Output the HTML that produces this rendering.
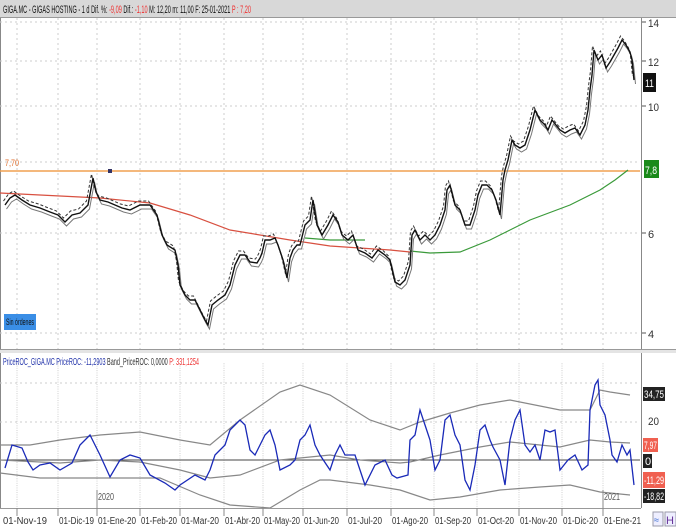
<!DOCTYPE html><html><head><meta charset="utf-8"><style>
body{margin:0;width:676px;height:527px;overflow:hidden;background:#fff;font-family:"Liberation Sans",sans-serif}
</style></head><body>
<svg width="676" height="527" xmlns="http://www.w3.org/2000/svg" font-family="Liberation Sans, sans-serif">
<defs>
<polyline id="pr" fill="none" points="5,205 10,198 15,195 22,200 30,205 40,208 50,212 58,215 65,222 72,215 80,213 88,205 93,178 96,192 100,200 108,202 115,205 122,208 130,210 140,205 150,205 157,215 162,235 167,245 175,250 178,265 180,285 185,295 190,300 195,300 200,310 205,320 208,325 212,305 218,300 225,295 230,285 235,265 240,255 245,255 250,262 257,263 260,258 262,253 265,240 270,240 275,238 278,245 283,260 287,278 290,258 293,250 297,245 300,245 305,225 310,220 313,200 317,225 322,235 328,225 333,215 338,222 342,235 348,240 353,235 358,250 365,253 372,258 378,250 385,255 390,260 395,282 400,285 405,280 410,265 412,235 415,230 420,240 425,235 430,240 435,235 440,225 445,210 447,190 450,185 455,205 460,210 465,225 470,225 475,210 478,195 482,185 487,185 492,190 496,200 500,215 503,180 505,170 508,160 510,150 512,140 515,145 520,148 525,145 530,130 535,110 540,120 545,125 548,130 552,120 556,125 560,130 565,133 570,130 575,128 580,135 585,125 588,110 590,90 592,75 594,50 598,60 602,55 606,68 610,62 614,55 618,48 622,40 626,45 630,52 632,60 634,80"/>
</defs>
<rect x="0" y="0" width="676" height="17" fill="#d8d8d8"/>
<line x1="0" y1="17.5" x2="676" y2="17.5" stroke="#999"/>
<text x="3" y="13" font-size="11" textLength="248" lengthAdjust="spacingAndGlyphs" fill="#111">GIGA.MC - GIGAS HOSTING - 1 d Dif. %: <tspan fill="#e33">-9,09</tspan> Dif.: <tspan fill="#e33">-1,10</tspan> M: 12,20 m: 11,00 F: 25-01-2021 <tspan fill="#e33">P : 7,20</tspan></text>
<line x1="0.5" y1="18" x2="0.5" y2="510" stroke="#888"/>
<line x1="641.5" y1="18" x2="641.5" y2="510" stroke="#888"/>
<g stroke="#ccc" stroke-dasharray="2,3">
<line x1="0" y1="22" x2="640" y2="22"/><line x1="0" y1="61" x2="640" y2="61"/><line x1="0" y1="106" x2="640" y2="106"/><line x1="0" y1="162" x2="640" y2="162"/><line x1="0" y1="233" x2="640" y2="233"/><line x1="0" y1="333" x2="640" y2="333"/>
<line x1="0" y1="383" x2="640" y2="383"/><line x1="0" y1="422" x2="640" y2="422"/>
<g id="vg"><line x1="17" y1="18" x2="17" y2="350"/><line x1="58" y1="18" x2="58" y2="350"/><line x1="97" y1="18" x2="97" y2="350"/><line x1="140" y1="18" x2="140" y2="350"/><line x1="180" y1="18" x2="180" y2="350"/><line x1="224" y1="18" x2="224" y2="350"/><line x1="263" y1="18" x2="263" y2="350"/><line x1="303" y1="18" x2="303" y2="350"/><line x1="347" y1="18" x2="347" y2="350"/><line x1="391" y1="18" x2="391" y2="350"/><line x1="434" y1="18" x2="434" y2="350"/><line x1="477" y1="18" x2="477" y2="350"/><line x1="519" y1="18" x2="519" y2="350"/><line x1="562" y1="18" x2="562" y2="350"/><line x1="603" y1="18" x2="603" y2="350"/></g>
<use href="#vg" transform="translate(0,355) scale(1,0.46)"/>
</g>
<line x1="0" y1="171" x2="640" y2="171" stroke="#f0a050" stroke-width="1.5"/>
<rect x="108" y="169" width="4" height="4" fill="#336"/>
<text x="5" y="166" font-size="9" fill="#e07030" textLength="14" lengthAdjust="spacingAndGlyphs">7,70</text>
<polyline fill="none" stroke="#d85040" stroke-width="1.2" points="0,193 40,195 100,198 150,203 190,215 230,230 290,240 330,246 390,250 410,252"/>
<polyline fill="none" stroke="#3a9a3a" stroke-width="1.2" points="305,238 330,240 365,240"/>
<polyline fill="none" stroke="#3a9a3a" stroke-width="1.2" points="410,251 430,253 460,252 490,240 530,220 570,205 600,190 615,180 628,170"/>
<use href="#pr" transform="translate(1.5,4)" stroke="#777" stroke-width="1"/>
<use href="#pr" transform="translate(-1.5,-4)" stroke="#333" stroke-width="1" stroke-dasharray="3,2"/>
<use href="#pr" stroke="#111" stroke-width="1.4"/>
<rect x="4" y="314" width="32" height="16" fill="#3a8ee6"/>
<text x="6" y="325" font-size="9" fill="#111" textLength="28" lengthAdjust="spacingAndGlyphs">Sin órdenes</text>
<g font-size="11" fill="#333"><text x="648" y="27" textLength="11" lengthAdjust="spacingAndGlyphs">14</text><text x="648" y="66" textLength="11" lengthAdjust="spacingAndGlyphs">12</text><text x="648" y="111" textLength="11" lengthAdjust="spacingAndGlyphs">10</text><text x="648" y="238">6</text><text x="648" y="338">4</text></g>
<g stroke="#555"><line x1="642" y1="22" x2="646" y2="22"/><line x1="642" y1="61" x2="646" y2="61"/><line x1="642" y1="106" x2="646" y2="106"/><line x1="642" y1="233" x2="646" y2="233"/><line x1="642" y1="333" x2="646" y2="333"/></g>
<rect x="643" y="73" width="13" height="19" fill="#111"/><text x="645" y="87" font-size="11" fill="#fff" textLength="9" lengthAdjust="spacingAndGlyphs">11</text>
<rect x="644" y="160" width="15" height="18" fill="#1a8a1a"/><text x="645" y="174" font-size="11" fill="#fff" textLength="12" lengthAdjust="spacingAndGlyphs">7,8</text>
<rect x="0" y="349" width="676" height="4" fill="#e4e4e4"/>
<line x1="0" y1="349.5" x2="676" y2="349.5" stroke="#999"/>
<text x="3" y="365" font-size="10" textLength="196" lengthAdjust="spacingAndGlyphs" fill="#2233aa">PriceROC_GIGA.MC PriceROC: -11,2903 <tspan fill="#333">Band_PriceROC: 0,0000</tspan> <tspan fill="#e33">P: 331,1254</tspan></text>
<line x1="0" y1="460" x2="640" y2="460" stroke="#444"/>
<g fill="none" stroke="#888" stroke-width="1.2">
<polyline points="0,445 30,445 60,440 100,435 140,432 180,440 210,445 240,420 280,392 300,385 330,395 370,420 400,430 420,422 450,413 480,405 510,400 560,410 590,410 600,390 610,392 630,395"/>
<polyline points="0,460 60,463 100,460 140,462 180,470 210,478 240,475 280,460 330,455 360,460 400,463 410,462 440,455 480,447 510,442 560,447 590,440 610,442 630,443"/>
<polyline points="0,473 40,478 100,478 160,478 200,495 230,505 270,508 300,490 320,480 330,480 370,485 400,490 430,500 460,497 500,490 540,487 570,485 600,492 630,495"/>
</g>
<polyline fill="none" stroke="#1a2ab8" stroke-width="1.3" points="5,468 12,445 22,448 28,462 33,470 40,465 50,463 60,470 72,463 80,445 90,435 95,445 100,455 110,477 120,460 130,455 140,458 150,475 165,483 175,490 180,485 195,475 205,480 210,470 215,455 220,450 225,445 230,430 235,425 240,420 245,425 250,450 255,455 260,445 265,435 270,430 275,445 280,470 290,465 295,460 300,440 305,435 310,425 315,445 320,455 330,470 335,455 340,445 345,455 355,455 360,470 365,485 375,465 385,460 392,475 397,478 408,475 410,440 415,435 420,410 425,425 430,440 435,470 440,460 445,420 450,415 455,435 460,445 465,480 470,490 475,465 480,430 485,425 490,440 493,447 500,460 505,485 510,440 515,420 520,410 525,445 530,452 535,445 540,460 545,430 550,432 555,430 560,470 568,460 575,455 582,470 588,465 590,410 595,385 598,380 600,405 605,415 610,440 612,455 617,462 622,445 627,455 630,450 634,485"/>
<text x="648" y="425" font-size="11" fill="#333" textLength="11" lengthAdjust="spacingAndGlyphs">20</text>
<g font-size="11" fill="#fff">
<rect x="643" y="387" width="22" height="14" fill="#222"/><text x="644" y="398" textLength="20" lengthAdjust="spacingAndGlyphs">34,75</text>
<rect x="643" y="438" width="15" height="14" fill="#f06050"/><text x="644" y="449" textLength="13" lengthAdjust="spacingAndGlyphs">7,97</text>
<rect x="643" y="454" width="9" height="14" fill="#222"/><text x="645" y="465">0</text>
<rect x="643" y="472" width="22" height="16" fill="#f06050"/><text x="644" y="484" textLength="20" lengthAdjust="spacingAndGlyphs">-11,29</text>
<rect x="643" y="489" width="22" height="14" fill="#222"/><text x="644" y="500" textLength="20" lengthAdjust="spacingAndGlyphs">-18,82</text>
</g>
<rect x="0" y="508" width="676" height="19" fill="#fff"/>
<line x1="0" y1="508.5" x2="641" y2="508.5" stroke="#999"/>
<g stroke="#888"><line x1="17" y1="508" x2="17" y2="516"/><line x1="58" y1="508" x2="58" y2="516"/><line x1="97" y1="490" x2="97" y2="516"/><line x1="140" y1="508" x2="140" y2="516"/><line x1="180" y1="508" x2="180" y2="516"/><line x1="224" y1="508" x2="224" y2="516"/><line x1="263" y1="508" x2="263" y2="516"/><line x1="303" y1="508" x2="303" y2="516"/><line x1="347" y1="508" x2="347" y2="516"/><line x1="391" y1="508" x2="391" y2="516"/><line x1="434" y1="508" x2="434" y2="516"/><line x1="477" y1="508" x2="477" y2="516"/><line x1="519" y1="508" x2="519" y2="516"/><line x1="562" y1="508" x2="562" y2="516"/><line x1="603" y1="490" x2="603" y2="516"/></g>
<text x="98" y="500" font-size="10" fill="#555" textLength="16" lengthAdjust="spacingAndGlyphs">2020</text><text x="604" y="500" font-size="10" fill="#555" textLength="16" lengthAdjust="spacingAndGlyphs">2021</text>
<g font-size="10" fill="#333" lengthAdjust="spacingAndGlyphs"><text x="3" y="524" textLength="44" lengthAdjust="spacingAndGlyphs">01-Nov-19</text><text x="59" y="524" textLength="35" lengthAdjust="spacingAndGlyphs">01-Dic-19</text><text x="98" y="524" textLength="38" lengthAdjust="spacingAndGlyphs">01-Ene-20</text><text x="141" y="524" textLength="36" lengthAdjust="spacingAndGlyphs">01-Feb-20</text><text x="181" y="524" textLength="38" lengthAdjust="spacingAndGlyphs">01-Mar-20</text><text x="225" y="524" textLength="35" lengthAdjust="spacingAndGlyphs">01-Abr-20</text><text x="264" y="524" textLength="36" lengthAdjust="spacingAndGlyphs">01-May-20</text><text x="304" y="524" textLength="35" lengthAdjust="spacingAndGlyphs">01-Jun-20</text><text x="348" y="524" textLength="34" lengthAdjust="spacingAndGlyphs">01-Jul-20</text><text x="392" y="524" textLength="36" lengthAdjust="spacingAndGlyphs">01-Ago-20</text><text x="435" y="524" textLength="36" lengthAdjust="spacingAndGlyphs">01-Sep-20</text><text x="478" y="524" textLength="36" lengthAdjust="spacingAndGlyphs">01-Oct-20</text><text x="520" y="524" textLength="37" lengthAdjust="spacingAndGlyphs">01-Nov-20</text><text x="563" y="524" textLength="35" lengthAdjust="spacingAndGlyphs">01-Dic-20</text><text x="604" y="524" textLength="37" lengthAdjust="spacingAndGlyphs">01-Ene-21</text></g>
<rect x="653" y="512" width="10" height="14" fill="#eef" stroke="#99a"/><text x="654" y="523" font-size="9" fill="#36c">≈</text>
<rect x="665" y="512" width="11" height="14" fill="#eef" stroke="#99a"/><text x="666" y="524" font-size="11" fill="#639">H</text>
</svg>
</body></html>
